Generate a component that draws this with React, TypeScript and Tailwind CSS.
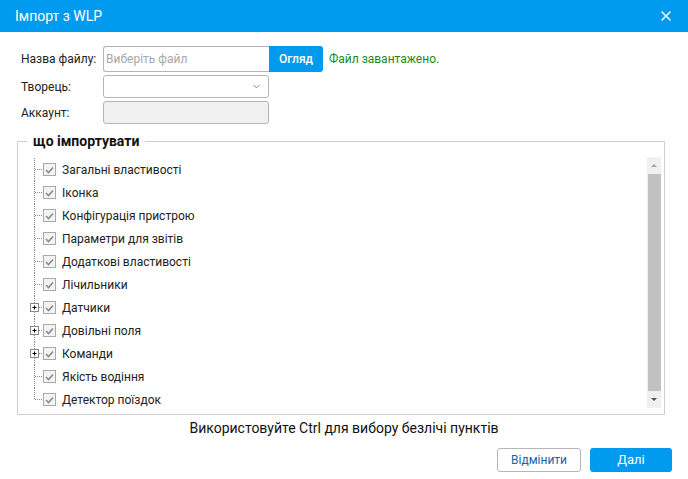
import { X, ChevronDown } from 'lucide-react';

const items = [
  { label: 'Загальні властивості', plus: false },
  { label: 'Іконка', plus: false },
  { label: 'Конфігурація пристрою', plus: false },
  { label: 'Параметри для звітів', plus: false },
  { label: 'Додаткові властивості', plus: false },
  { label: 'Лічильники', plus: false },
  { label: 'Датчики', plus: true },
  { label: 'Довільні поля', plus: true },
  { label: 'Команди', plus: true },
  { label: 'Якість водіння', plus: false },
  { label: 'Детектор поїздок', plus: false },
];

function Connector({ last, plus }: { last: boolean; plus: boolean }) {
  return (
    <svg width="16" height="23" className="shrink-0">
      <line x1="7.5" y1="0" x2="7.5" y2={last ? 11.5 : 23} stroke="#888" strokeDasharray="1 1" />
      <line x1="8" y1="11.5" x2="16" y2="11.5" stroke="#888" strokeDasharray="1 1" />
      {plus && (
        <g>
          <rect x="3.5" y="7.5" width="8" height="8" fill="#fff" stroke="#888" />
          <line x1="5.5" y1="11.5" x2="9.5" y2="11.5" stroke="#000" />
          <line x1="7.5" y1="9.5" x2="7.5" y2="13.5" stroke="#000" />
        </g>
      )}
    </svg>
  );
}

function Check() {
  return (
    <span className="w-[13px] h-[13px] border border-[#a9a9a9] bg-[#f3f3f3] flex items-center justify-center shrink-0">
      <svg width="9" height="8" viewBox="0 0 9 8">
        <path d="M1 4 L3.5 6.5 L8 1.5" fill="none" stroke="#8a8a8a" strokeWidth="1.6" />
      </svg>
    </span>
  );
}

export default function App() {
  return (
    <div className="w-[688px] h-[479px] bg-white flex flex-col font-['Roboto',sans-serif] text-[12px] text-[#222]">
      <div className="h-[32px] bg-[#009bee] flex items-center justify-between pl-[15px] pr-[14px] text-white shrink-0">
        <span className="text-[14px]">Імпорт з WLP</span>
        <X size={16} strokeWidth={2} />
      </div>

      <div className="flex flex-col gap-[3px] pl-[21px] pt-[14px]">
        <div className="flex items-center h-[26px]">
          <span className="w-[82px]">Назва файлу:</span>
          <div className="flex h-[26px]">
            <div className="w-[166px] border border-[#b5b5b5] border-r-0 rounded-l-[3px] flex items-center pl-[2px] text-[#a8a8a8]">
              Виберіть файл
            </div>
            <button className="w-[54px] bg-[#009bee] text-white rounded-r-[3px] text-[12px] font-medium">Огляд</button>
          </div>
          <span className="ml-[6px] text-[#1b8a1b]">Файл завантажено.</span>
        </div>
        <div className="flex items-center h-[23px]">
          <span className="w-[82px]">Творець:</span>
          <div className="w-[166px] h-[23px] border border-[#b5b5b5] rounded-[3px] flex items-center justify-end pr-[6px] text-[#777]">
            <ChevronDown size={11} />
          </div>
        </div>
        <div className="flex items-center h-[23px]">
          <span className="w-[82px]">Аккаунт:</span>
          <div className="w-[166px] h-[23px] border border-[#b5b5b5] rounded-[3px] bg-[#f0f0f0]" />
        </div>
      </div>

      <fieldset className="mx-[17px] mt-[7px] w-[648px] h-[284px] border border-[#cfcfcf] pl-[9px] pr-[3px] pb-[3px]">
        <legend className="px-[6px] font-bold text-[14px] text-[#111]">що імпортувати</legend>
        <div className="flex h-[251px] mt-[5px]">
          <div className="flex-1 flex flex-col pt-[1px]">
            {items.map((it, i) => (
              <div key={it.label} className="flex items-center h-[23px]">
                <Connector last={i === items.length - 1} plus={it.plus} />
                <Check />
                <span className="ml-[6px] text-[#222]">{it.label}</span>
              </div>
            ))}
          </div>
          <div className="w-[14px] bg-[#f0f0f0] flex flex-col items-center">
            <svg width="8" height="17" className="shrink-0"><path d="M1 10 L4 7 L7 10 Z" fill="#a3a3a3" /></svg>
            <div className="w-[13px] flex-1 bg-[#c1c1c1]" />
            <svg width="8" height="17" className="shrink-0"><path d="M1 7 L4 10 L7 7 Z" fill="#505050" /></svg>
          </div>
        </div>
      </fieldset>

      <div className="text-center text-[14px] text-[#111] mt-[3px]">Використовуйте Ctrl для вибору безлічі пунктів</div>

      <div className="flex justify-end gap-[9px] pr-[16px] mt-[9px]">
        <button className="w-[84px] h-[24px] border border-[#b5b5b5] rounded-[3px] text-[#1a5fb4] bg-white text-[12px]">Відмінити</button>
        <button className="w-[82px] h-[24px] rounded-[3px] bg-[#009bee] text-white text-[13px]">Далі</button>
      </div>
    </div>
  );
}
